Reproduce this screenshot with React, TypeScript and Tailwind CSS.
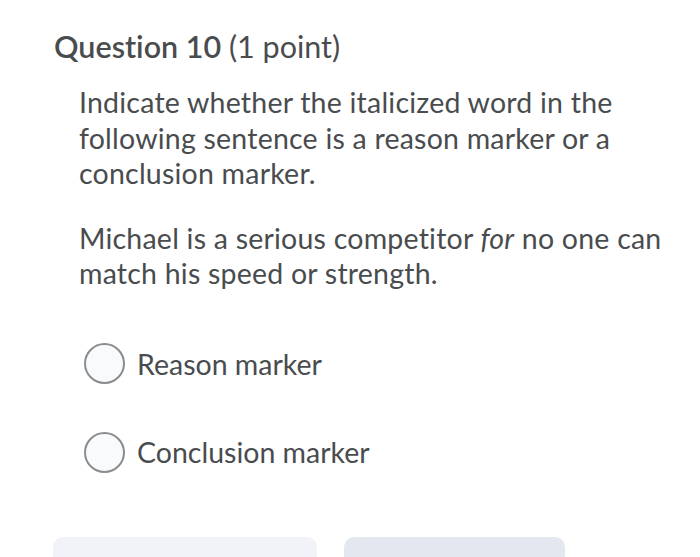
const options = ["Reason marker", "Conclusion marker"];

export default function App() {
  return (
    <div
      className="w-[700px] h-[557px] overflow-hidden bg-white text-[#494c4e] [font-variant-ligatures:none]"
      style={{ fontFamily: "Lato, 'Open Sans', sans-serif" }}
    >
      <div className="pl-[54px] pt-[26px]">
        <h2 className="text-[30.5px] leading-[40px]">
          <span className="font-semibold">Question 10</span> (1 point)
        </h2>
        <div className="pl-[25px] w-[620px] mt-[19px] text-[28.5px] leading-[35.5px] tracking-[0.22px]">
          <p>Indicate whether the italicized word in the following sentence is a reason marker or a conclusion marker.</p>
          <p className="mt-[29px]">
            Michael is a serious competitor <em>for</em> no one can match his speed or strength.
          </p>
        </div>
        <div className="mt-[51px] flex flex-col gap-[46px] pl-[30px]">
          {options.map((o) => (
            <label key={o} className="flex items-center gap-[12px] text-[28.5px]">
              <span className="w-[41px] h-[41px] rounded-full border-2 border-[#8a8c8e] bg-[#f9fafb] shrink-0" />
              <span>{o}</span>
            </label>
          ))}
        </div>
        <div className="mt-[63px] flex gap-[27px] -ml-px">
          <div className="w-[264px] h-[40px] rounded-[10px] bg-[#f1f3f8]" />
          <div className="w-[221px] h-[40px] rounded-[10px] bg-[#e3e7ef]" />
        </div>
      </div>
    </div>
  );
}
